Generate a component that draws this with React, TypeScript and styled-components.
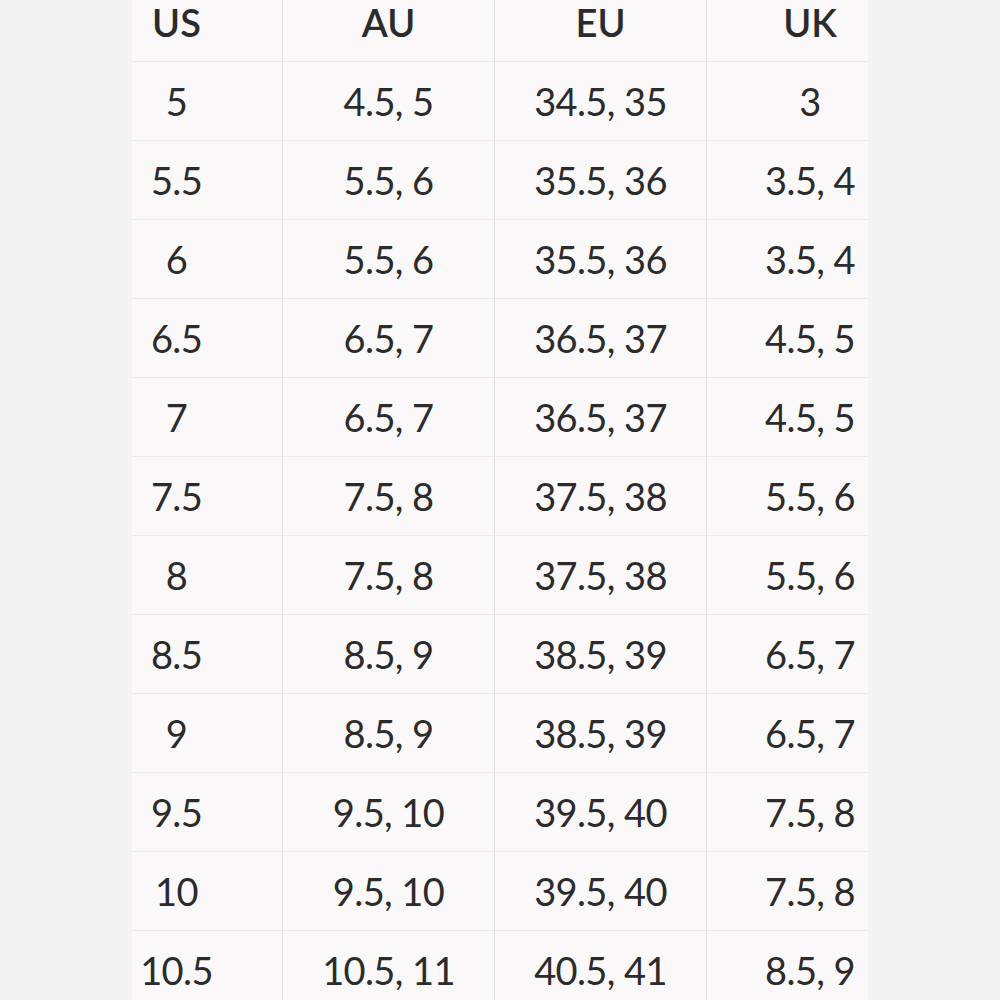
import React from "react";
import styled, { createGlobalStyle } from "styled-components";

const Global = createGlobalStyle`
  html, body { margin: 0; padding: 0; background: #f4f3f4; }
  body { font-family: "Lato", "Liberation Sans", sans-serif; color: #2b2b2b; overflow: hidden; }
`;

const Page = styled.div`
  width: 1000px;
  height: 1000px;
  overflow: hidden;
  display: flex;
  justify-content: flex-start;
  padding-left: 132px;
  box-sizing: border-box;
`;

const Table = styled.div`
  margin-top: -17px;
  width: 736px;
  background: #faf8f9;
  display: grid;
  grid-template-columns: 151px 212px 212px 161px;
  align-self: flex-start;
`;

const Cell = styled.div<{ $col: number; $head?: boolean }>`
  height: 79px;
  box-sizing: border-box;
  display: flex;
  align-items: center;
  justify-content: center;
  font-size: 38px;
  font-weight: ${(p) => (p.$head ? 600 : 400)};
  letter-spacing: ${(p) => (p.$head ? "0" : "-0.6px")};
  border-bottom: 1px solid #ebe9ea;
  border-right: ${(p) => (p.$col < 3 ? "1px solid #dfdddd" : "none")};
  padding-right: ${(p) => (p.$col === 0 ? 61 : 0)}px;
  padding-left: ${(p) => (p.$col === 3 ? 45 : 0)}px;
  white-space: nowrap;
`;

const head = ["US", "AU", "EU", "UK"];
const rows = [
  ["5", "4.5, 5", "34.5, 35", "3"],
  ["5.5", "5.5, 6", "35.5, 36", "3.5, 4"],
  ["6", "5.5, 6", "35.5, 36", "3.5, 4"],
  ["6.5", "6.5, 7", "36.5, 37", "4.5, 5"],
  ["7", "6.5, 7", "36.5, 37", "4.5, 5"],
  ["7.5", "7.5, 8", "37.5, 38", "5.5, 6"],
  ["8", "7.5, 8", "37.5, 38", "5.5, 6"],
  ["8.5", "8.5, 9", "38.5, 39", "6.5, 7"],
  ["9", "8.5, 9", "38.5, 39", "6.5, 7"],
  ["9.5", "9.5, 10", "39.5, 40", "7.5, 8"],
  ["10", "9.5, 10", "39.5, 40", "7.5, 8"],
  ["10.5", "10.5, 11", "40.5, 41", "8.5, 9"],
];

export default function App() {
  return (
    <>
      <Global />
      <Page>
        <Table>
          {head.map((h, i) => (
            <Cell key={h} $col={i} $head>
              {h}
            </Cell>
          ))}
          {rows.map((r, ri) =>
            r.map((v, ci) => (
              <Cell key={`${ri}-${ci}`} $col={ci}>
                {v}
              </Cell>
            ))
          )}
        </Table>
      </Page>
    </>
  );
}
